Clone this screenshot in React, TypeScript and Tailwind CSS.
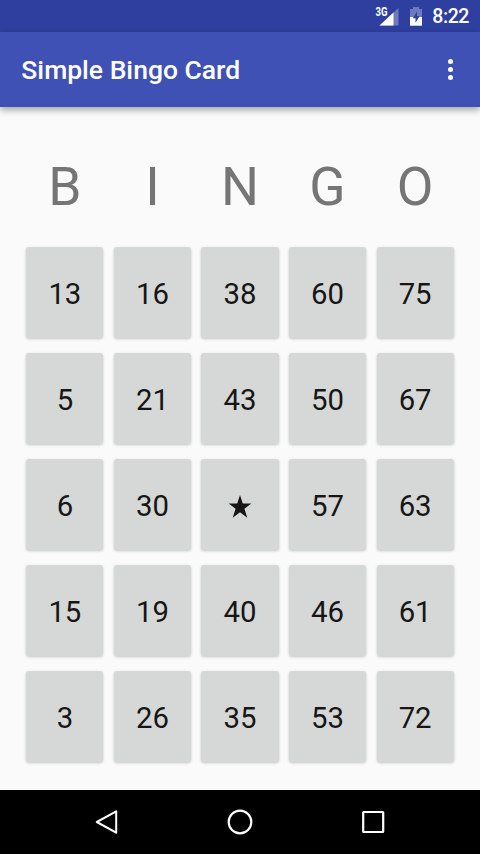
type CellProps = {
  value: number | null;
};

const LETTERS = ["B", "I", "N", "G", "O"];

// null is the free space
const ROWS: (number | null)[][] = [
  [13, 16, 38, 60, 75],
  [5, 21, 43, 50, 67],
  [6, 30, null, 57, 63],
  [15, 19, 40, 46, 61],
  [3, 26, 35, 53, 72],
];

const StatusBar = () => {
  return (
    <div className="flex h-8 shrink-0 items-center justify-end bg-[#2f3f9f] pr-[11px] text-white">
      <svg width="26" height="32" viewBox="0 0 26 32" className="mr-[9px]">
        <path d="M24.500 8v17.500H5.500z" fill="#6f7bc0" />
        <path d="M19.500 12.600v12.900H5.500z" fill="#fff" />
        <text
          x="1.500"
          y="15.500"
          fill="#fff"
          fontSize="12"
          fontWeight="700"
          textLength="12"
          lengthAdjust="spacingAndGlyphs"
          className="font-['Roboto',sans-serif]"
        >
          3G
        </text>
      </svg>
      <svg width="14" height="32" viewBox="0 0 14 32" className="mr-[9px]">
        <path d="M4 7h6v2h3v9H1V9h3z" fill="#6f7bc0" />
        <path d="M1 17h12v8.700H1z" fill="#fff" />
        <path d="M8 11.500 3.800 18.300h2.700v4.500l4.200-6.800H8z" fill="#2f3f9f" />
      </svg>
      <span className="pt-px text-[19.5px] leading-8 font-medium tracking-[-0.4px]">8:22</span>
    </div>
  );
};

const AppBar = () => {
  return (
    <header className="relative flex h-[74.67px] shrink-0 items-center justify-between bg-[#3f51b5] pr-[27px] pl-[21.33px] text-white shadow-[0_3px_7px_rgba(0,0,0,0.35)]">
      <h1 className="pt-[2px] text-[26.5px] leading-8 font-medium">Simple Bingo Card</h1>
      <button className="flex flex-col gap-[2.67px]" aria-label="More options">
        <span className="size-[5.33px] rounded-full bg-white" />
        <span className="size-[5.33px] rounded-full bg-white" />
        <span className="size-[5.33px] rounded-full bg-white" />
      </button>
    </header>
  );
};

const Cell = ({ value }: CellProps) => {
  return (
    <button className="flex items-center justify-center rounded-[3px] bg-[#d6d8d7] text-[29.33px] leading-none text-[#161616] shadow-[0_1px_3px_rgba(0,0,0,0.22)]">
      {value === null ? (
        <svg width="24" height="24" viewBox="0 0 24 24" className="mt-[5px]" aria-label="Free">
          <path
            d="M12 0l2.800 8.600h8.500l-6.900 5.200 2.900 8.900L12 17.300l-7.300 5.400 2.900-8.900L.7 8.600h8.500z"
            fill="#161616"
          />
        </svg>
      ) : (
        <span className="mt-[5px]">{value}</span>
      )}
    </button>
  );
};

const NavBar = () => {
  return (
    <nav className="flex h-16 shrink-0 items-center justify-between bg-black px-[93px]">
      <svg width="28" height="28" viewBox="0 0 28 28" fill="none" stroke="#fff" strokeWidth="2">
        <path d="M23.200 3.300v21.400L3.800 14z" strokeLinejoin="round" />
      </svg>
      <svg width="28" height="28" viewBox="0 0 28 28" fill="none" stroke="#fff" strokeWidth="2.200">
        <circle cx="14" cy="14" r="11.300" />
      </svg>
      <svg width="28" height="28" viewBox="0 0 28 28" fill="none" stroke="#fff" strokeWidth="2.200">
        <rect x="4.200" y="4" width="20" height="20" rx="0.500" />
      </svg>
    </nav>
  );
};

const App = () => {
  return (
    <div className="flex h-[854px] w-[480px] flex-col overflow-hidden bg-[#fafafa] font-['Roboto',sans-serif]">
      <StatusBar />
      <AppBar />
      <main className="flex flex-1 flex-col px-[26.3px] pt-[48.3px] pb-[28.5px]">
        <div className="grid h-[64px] grid-cols-5 gap-x-[10.3px] text-center text-[53.33px] leading-[64px] text-[#757575]">
          {LETTERS.map((letter) => (
            <span key={letter}>{letter}</span>
          ))}
        </div>
        <div className="mt-[28.3px] grid flex-1 grid-cols-5 grid-rows-5 gap-x-[10.4px] gap-y-[15.7px]">
          {ROWS.flat().map((value, index) => (
            <Cell key={index} value={value} />
          ))}
        </div>
      </main>
      <NavBar />
    </div>
  );
};

export default App;
